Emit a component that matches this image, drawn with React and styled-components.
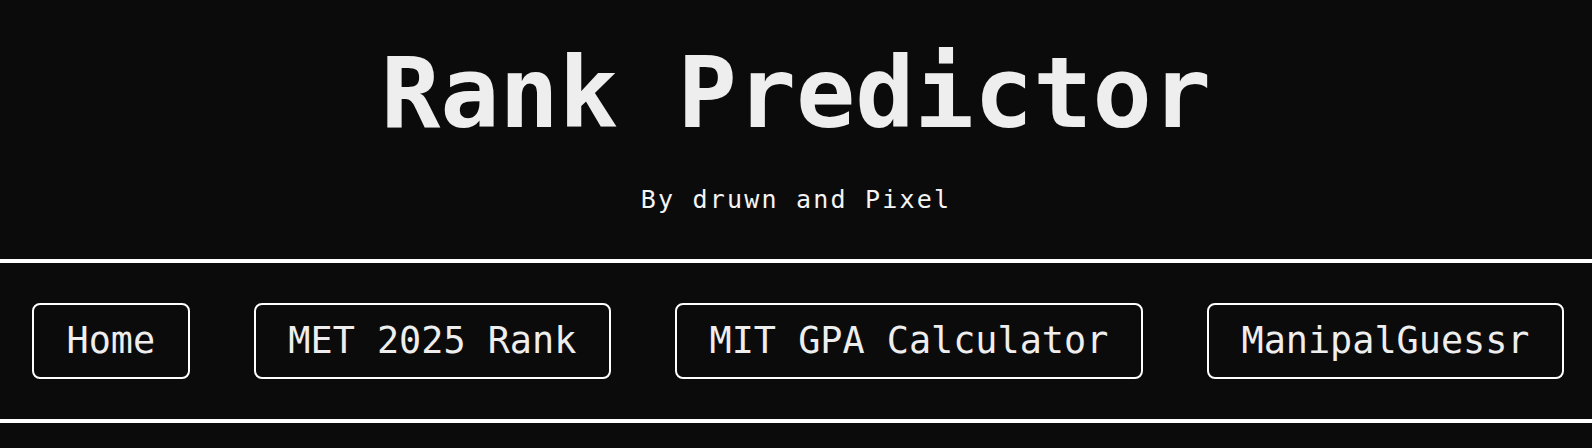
import styled, { createGlobalStyle } from "styled-components"

const GlobalStyle = createGlobalStyle`
  html, body {
    margin: 0;
    padding: 0;
    background: #0b0b0b;
  }
  body {
    min-height: 100vh;
    color: #eeeeee;
    font-family: "DejaVu Sans Mono", "Liberation Mono", monospace;
  }
`

const Page = styled.div`
  min-height: 100vh;
  background: #0b0b0b;
`

const Header = styled.header`
  display: flex;
  flex-direction: column;
  align-items: center;
  padding: 44px 0 47px;
`

const Title = styled.h1`
  margin: 0;
  font-size: 98.5px;
  font-weight: 700;
  line-height: 1;
  color: #eeeeee;
`

const Subtitle = styled.p`
  margin: 44px 0 0;
  font-size: 25px;
  line-height: 1;
  letter-spacing: 2.2px;
  color: #f4f4f4;
`

const Nav = styled.nav`
  display: flex;
  justify-content: space-between;
  align-items: center;
  padding: 40px 28px 40px 32px;
  border-top: 4px solid #ffffff;
  border-bottom: 4px solid #ffffff;
`

const NavButton = styled.button`
  display: flex;
  align-items: center;
  height: 76px;
  padding: 0 32.5px;
  border: 2px solid #ffffff;
  border-radius: 8px;
  background: transparent;
  color: #eeeeee;
  font-family: inherit;
  font-size: 36.8px;
  cursor: pointer;
`

const links = ["Home", "MET 2025 Rank", "MIT GPA Calculator", "ManipalGuessr"]

export default function App() {
  return (
    <Page>
      <GlobalStyle />
      <Header>
        <Title>Rank Predictor</Title>
        <Subtitle>By druwn and Pixel</Subtitle>
      </Header>
      <Nav>
        {links.map((label) => (
          <NavButton key={label}>{label}</NavButton>
        ))}
      </Nav>
    </Page>
  )
}
